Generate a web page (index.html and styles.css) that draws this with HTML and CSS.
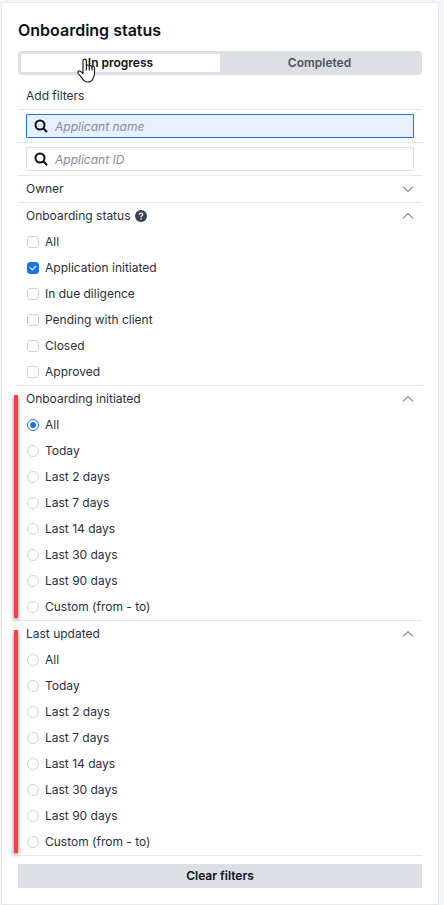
FILE: index.html
```html
<!DOCTYPE html>
<html lang="en">
<head>
    <meta charset="UTF-8">
    <meta name="viewport" content="width=device-width, initial-scale=1.0">
    <title>Onboarding status</title>
    <link rel="stylesheet" href="styles.css">
</head>
<body>
    <main class="panel">
        <h1>Onboarding status</h1>

        <div class="tabs">
            <button class="tab active" type="button">In progress</button>
            <button class="tab" type="button">Completed</button>
            <svg class="pointer" width="19" height="26" viewBox="0 0 19 26">
                <path d="M6 15.500V3c0-2.500 3.400-2.500 3.400 0V8c.4-1.500 2.900-1.300 2.900.4.400-1.200 2.700-1 2.700.7.500-1 2.500-.8 2.500.9v5.500c0 3-1.400 4.500-2 6-.9 1.700-2.600 2.500-4.500 2.500-2.500 0-4-.9-5-2.500-1.200-2-3.300-4-4.700-6-1.200-2 1-3.300 2.600-1.900z" fill="#fff" stroke="#1b1b2b" stroke-width="1.200" stroke-linejoin="round"/>
                <path d="M9.400 7.500V12.500M12.300 8.500V12.500M15 9.300V12.500" fill="none" stroke="#1b1b2b" stroke-width="1.200"/>
            </svg>
        </div>

        <h2 class="row">Add filters</h2>

        <div class="search-row">
            <label class="search focused">
                <svg width="14" height="14" viewBox="0 0 14 14"><circle cx="6" cy="6" r="4.500"/><path d="M9.300 9.300L13 13"/></svg>
                <input type="text" placeholder="Applicant name" aria-label="Applicant name">
            </label>
        </div>
        <div class="search-row">
            <label class="search">
                <svg width="14" height="14" viewBox="0 0 14 14"><circle cx="6" cy="6" r="4.500"/><path d="M9.300 9.300L13 13"/></svg>
                <input type="text" placeholder="Applicant ID" aria-label="Applicant ID">
            </label>
        </div>

        <section class="group">
            <button class="group-head" type="button" aria-expanded="false">
                <span>Owner</span>
                <svg class="chevron" width="12" height="8" viewBox="0 0 12 8"><path d="M1 1.500L6 6.500L11 1.500"/></svg>
            </button>
        </section>

        <section class="group">
            <button class="group-head" type="button" aria-expanded="true">
                <span>Onboarding status</span>
                <svg class="help" width="12" height="12" viewBox="0 0 12 12">
                    <circle cx="6" cy="6" r="6" fill="#3a4354"/>
                    <path d="M4.300 4.700C4.400 2.500 7.700 2.600 7.700 4.600C7.700 5.800 6 5.800 6 7.200" fill="none" stroke="#fff" stroke-width="1.300"/>
                    <circle cx="6" cy="9" r=".8" fill="#fff"/>
                </svg>
                <svg class="chevron" width="12" height="8" viewBox="0 0 12 8"><path d="M1 6.500L6 1.500L11 6.500"/></svg>
            </button>
            <label class="option"><input type="checkbox" name="status">All</label>
            <label class="option"><input type="checkbox" name="status" checked>Application initiated</label>
            <label class="option"><input type="checkbox" name="status">In due diligence</label>
            <label class="option"><input type="checkbox" name="status">Pending with client</label>
            <label class="option"><input type="checkbox" name="status">Closed</label>
            <label class="option"><input type="checkbox" name="status">Approved</label>
        </section>

        <section class="group marked">
            <button class="group-head" type="button" aria-expanded="true">
                <span>Onboarding initiated</span>
                <svg class="chevron" width="12" height="8" viewBox="0 0 12 8"><path d="M1 6.500L6 1.500L11 6.500"/></svg>
            </button>
            <label class="option"><input type="radio" name="initiated" checked>All</label>
            <label class="option"><input type="radio" name="initiated">Today</label>
            <label class="option"><input type="radio" name="initiated">Last 2 days</label>
            <label class="option"><input type="radio" name="initiated">Last 7 days</label>
            <label class="option"><input type="radio" name="initiated">Last 14 days</label>
            <label class="option"><input type="radio" name="initiated">Last 30 days</label>
            <label class="option"><input type="radio" name="initiated">Last 90 days</label>
            <label class="option"><input type="radio" name="initiated">Custom (from - to)</label>
        </section>

        <section class="group marked">
            <button class="group-head" type="button" aria-expanded="true">
                <span>Last updated</span>
                <svg class="chevron" width="12" height="8" viewBox="0 0 12 8"><path d="M1 6.500L6 1.500L11 6.500"/></svg>
            </button>
            <label class="option"><input type="radio" name="updated">All</label>
            <label class="option"><input type="radio" name="updated">Today</label>
            <label class="option"><input type="radio" name="updated">Last 2 days</label>
            <label class="option"><input type="radio" name="updated">Last 7 days</label>
            <label class="option"><input type="radio" name="updated">Last 14 days</label>
            <label class="option"><input type="radio" name="updated">Last 30 days</label>
            <label class="option"><input type="radio" name="updated">Last 90 days</label>
            <label class="option"><input type="radio" name="updated">Custom (from - to)</label>
        </section>

        <button class="clear" type="button">Clear filters</button>
    </main>
</body>
</html>
```

FILE: styles.css
```css
* {
    box-sizing: border-box;
}

body {
    margin: 0;
    padding: 2px 5px 0 1px;
    background: #f3f5f8;
    color: #283040;
    font-family: Inter, sans-serif;
    font-size: 12px;
    line-height: 16px;
}

button,
input {
    font: inherit;
    color: inherit;
}

button {
    border: none;
    cursor: pointer;
}

.panel {
    padding: 16px;
    background: #fff;
    border: 1px solid #e6e9ec;
}

h1 {
    margin: 0 0 10px;
    color: #0c111c;
    font-size: 16px;
    font-weight: 600;
    line-height: 22px;
}

/* tabs */
.tabs {
    position: relative;
    display: flex;
    margin-bottom: 8px;
    padding: 3px;
    background: #dce0e5;
    border-radius: 4px;
}

.tab {
    flex: 1;
    height: 18px;
    padding: 0;
    background: none;
    border-radius: 2px;
    color: #4a5263;
    font-weight: 600;
}

.tab.active {
    background: #fff;
    color: #0c111c;
}

.pointer {
    position: absolute;
    left: 59px;
    top: 7px;
}

/* search fields */
.row {
    margin: 0;
    padding: 5px 8px;
    border-bottom: 1px solid #e6e8eb;
    font-size: 12px;
    font-weight: 400;
}

.search-row {
    padding: 4px 8px;
    border-bottom: 1px solid #e6e8eb;
}

.search {
    display: flex;
    align-items: center;
    gap: 7px;
    height: 24px;
    padding: 0 7px;
    border: 1px solid #dadde2;
    border-radius: 1px;
}

.search.focused {
    background: #e8effd;
    border-color: #1a73e8;
}

.search svg {
    fill: none;
    stroke: #0c111c;
    stroke-width: 2;
}

.search input {
    flex: 1;
    min-width: 0;
    padding: 1px 0 0;
    background: none;
    border: none;
    outline: none;
}

.search input::placeholder {
    color: #858d9b;
    font-style: italic;
}

/* filter groups */
.group {
    position: relative;
    border-bottom: 1px solid #e6e8eb;
}

.group-head {
    display: flex;
    align-items: center;
    gap: 5px;
    width: 100%;
    height: 26px;
    padding: 0 8px;
    background: none;
    text-align: left;
}

.chevron {
    margin-left: auto;
    fill: none;
    stroke: #3a4354;
    stroke-width: 1;
}

.option {
    display: flex;
    align-items: center;
    gap: 6px;
    height: 26px;
    padding: 0 9px;
}

.option input {
    appearance: none;
    display: grid;
    place-items: center;
    width: 12px;
    height: 12px;
    margin: 0;
    background: #fff;
    border: 1px solid #ccd0d6;
    border-radius: 3px;
}

.option input[type="radio"] {
    border-radius: 50%;
}

.option input:checked {
    border-color: #1a73f0;
}

.option input[type="checkbox"]:checked {
    background: #1a73f0;
}

.option input[type="checkbox"]:checked::before {
    content: "";
    width: 5px;
    height: 3px;
    margin-bottom: 2px;
    border: solid #fff;
    border-width: 0 0 1px 1px;
    transform: rotate(-45deg);
}

.option input[type="radio"]:checked::before {
    content: "";
    width: 6px;
    height: 6px;
    background: #1a73f0;
    border-radius: 50%;
}

/* red marker beside a group */
.marked::before {
    content: "";
    position: absolute;
    left: -4px;
    top: 9px;
    bottom: 2px;
    width: 4px;
    background: #ff4040;
    box-shadow: 0 2px 4px rgba(0, 0, 0, 0.5);
}

.clear {
    width: 100%;
    height: 24px;
    margin-top: 8px;
    background: #dce0e5;
    border-radius: 1px;
    color: #0c111c;
    font-weight: 600;
}
```
